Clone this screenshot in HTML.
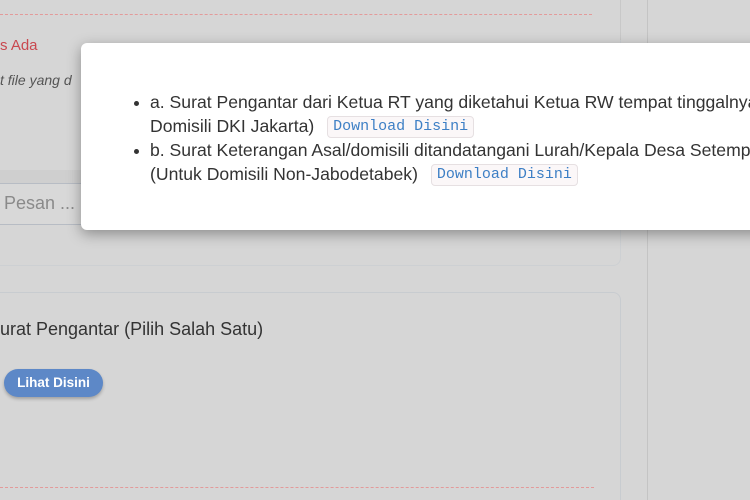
<!DOCTYPE html>
<html style="overflow:hidden"><head><style>
html,body{overflow:hidden}
body{margin:0;width:750px;height:500px;background:#d6d6d6;font-family:"Liberation Sans",Arial,sans-serif;position:relative}
.abs{position:absolute}
.dash{border-top:1px dashed #e39a9a;height:0}
.card{border:1px solid #c8ccd0;border-radius:8px}
.modal{left:81px;top:43px;width:700px;height:187px;background:#fff;border-radius:6px;box-shadow:0 4px 14px rgba(0,0,0,.35)}
.modal ul{margin:0;padding:0;position:absolute;left:69px;top:47px;list-style:none;font-size:17.6px;line-height:24px;color:#333;white-space:nowrap}
.modal li{position:relative;height:48px}
.modal li:before{content:"";position:absolute;left:-16px;top:11px;width:5px;height:5px;border-radius:50%;background:#333}
code{font-family:"Liberation Mono",monospace;font-size:15px;line-height:18px;display:inline-block;vertical-align:top;margin-top:2px;color:#3d7fc5;background:#fbf7f8;border:1px solid #e6e0e2;border-radius:4px;padding:1px 5px;margin-left:8px}
</style></head><body>
<div class="abs dash" style="left:0;top:14px;width:592px"></div>
<div class="abs" style="left:0;top:37px;color:#c9484f;font-size:15px">s Ada</div>
<div class="abs" style="left:0;top:72px;color:#555;font-size:14px;font-style:italic">t file yang d</div>
<div class="abs" style="left:0;top:170px;width:619px;height:13px;background:#cfcfcf"></div>
<div class="abs" style="left:0;top:183px;width:560px;height:40px;border-top:1px solid #b7bcc4;border-bottom:1px solid #b7bcc4;background:#d8d8d8"></div>
<div class="abs" style="left:4px;top:193px;color:#8a8a8a;font-size:18px">Pesan ...</div>
<div class="abs card" style="left:-20px;top:-10px;width:639px;height:274px;border-color:#cdd0d3"></div>
<div class="abs" style="left:620px;top:0;width:1px;height:40px;background:#c8c8c8"></div>
<div class="abs" style="left:647px;top:0;width:1px;height:500px;background:#c4c4c4"></div>
<div class="abs card" style="left:-20px;top:292px;width:639px;height:230px"></div>
<div class="abs" style="left:0;top:319px;color:#333;font-size:18px">urat Pengantar (Pilih Salah Satu)</div>
<div class="abs" style="left:4px;top:369px;width:99px;height:28px;border-radius:14px;background:#5d88c7;box-shadow:0 2px 3px rgba(0,0,0,.25);color:#fff;font-size:13.5px;font-weight:bold;text-align:center;line-height:28px">Lihat Disini</div>
<div class="abs dash" style="left:0;top:487px;width:594px;border-color:#e39a9a"></div>
<div class="abs modal">
<ul>
<li>a. Surat Pengantar dari Ketua RT yang diketahui Ketua RW tempat tinggalnya<br>Domisili DKI Jakarta) <code>Download Disini</code></li>
<li>b. Surat Keterangan Asal/domisili ditandatangani Lurah/Kepala Desa Setempat<br>(Untuk Domisili Non-Jabodetabek) <code>Download Disini</code></li>
</ul>
</div>
</body></html>
